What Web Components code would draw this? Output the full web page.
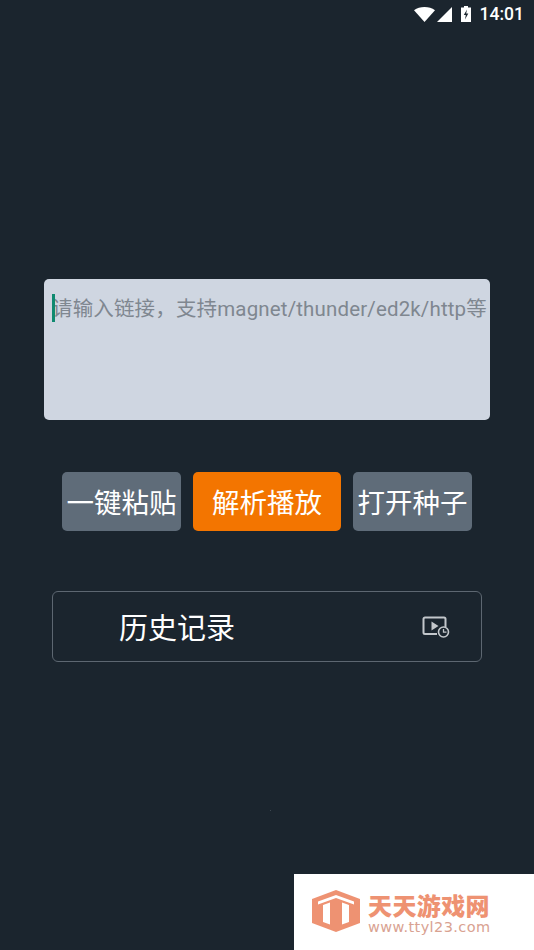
<!DOCTYPE html>
<html lang="zh">
<head>
<meta charset="utf-8">
<title>解析播放</title>
<style>
  html, body { margin: 0; height: 100%; background: #1b252e; }
</style>
</head>
<body>
<app-screen>
  <status-bar slot="status"></status-bar>
  <link-input placeholder="请输入链接，支持magnet/thunder/ed2k/http等"></link-input>
  <div class="buttons" style="display:flex;gap:12px;margin:52px 0 0 62px;">
    <action-button style="--btn-w:119px">一键粘贴</action-button>
    <action-button style="--btn-w:148px;--btn-bg:#f37500">解析播放</action-button>
    <action-button style="--btn-w:119px">打开种子</action-button>
  </div>
  <history-row>历史记录</history-row>
  <water-mark slot="overlay"></water-mark>
</app-screen>

<script>
const CJK = 'Roboto, "Noto Sans CJK SC", "Noto Sans", sans-serif';

class AppScreen extends HTMLElement {
    constructor() {
        super();
        this.attachShadow({ mode: 'open' });
    }
    connectedCallback() {
        this.shadowRoot.innerHTML = `
            <style>
                :host {
                    display: block;
                    position: relative;
                    width: 534px;
                    height: 950px;
                    overflow: hidden;
                    background: #1b252e;
                    font-family: ${CJK};
                }
                main { padding-top: 251px; }
                .dot {
                    position: absolute;
                    left: 270px;
                    top: 810px;
                    width: 1px;
                    height: 1px;
                    background: #3d4750;
                }
            </style>
            <slot name="status"></slot>
            <main><slot></slot></main>
            <div class="dot"></div>
            <slot name="overlay"></slot>
        `;
    }
}

class StatusBar extends HTMLElement {
    constructor() {
        super();
        this.attachShadow({ mode: 'open' });
    }
    connectedCallback() {
        this.shadowRoot.innerHTML = `
            <style>
                :host {
                    display: flex;
                    align-items: center;
                    justify-content: flex-end;
                    height: 28px;
                    padding-right: 10px;
                    color: #fff;
                    font: 500 17.500px Roboto, sans-serif;
                }
                svg { display: block; fill: #fff; }
                .wifi { margin-right: 2px; }
                .signal { margin-right: 9px; }
                .batt { margin-right: 9px; }
            </style>
            <svg class="wifi" width="21" height="15" viewBox="0 0 21 15"><path d="M0 3.2C3 1 6.500 0 10.500 0S18 1 21 3.200L10.500 15z"/></svg>
            <svg class="signal" width="15" height="15" viewBox="0 0 15 15"><path d="M15 0V15H0z"/></svg>
            <svg class="batt" width="10" height="16" viewBox="0 0 10 16"><path fill-rule="evenodd" d="M3 0H7V1.500H10V16H0V1.500H3zM6 3.500L2.800 9H4.800L4 13.500L7.300 7.500H5.200z"/></svg>
            <span>14:01</span>
        `;
    }
}

class LinkInput extends HTMLElement {
    constructor() {
        super();
        this.attachShadow({ mode: 'open' });
    }
    connectedCallback() {
        const placeholder = this.getAttribute('placeholder') || '';
        this.shadowRoot.innerHTML = `
            <style>
                :host {
                    display: block;
                    box-sizing: border-box;
                    position: relative;
                    width: 446px;
                    height: 141px;
                    margin-left: 44px;
                    padding: 15px 0 0 8px;
                    border-radius: 5px;
                    background: #cfd6e1;
                }
                .text {
                    color: #7f8790;
                    font-size: 20.500px;
                    letter-spacing: 0.150px;
                    line-height: 30px;
                    white-space: nowrap;
                }
                .caret {
                    position: absolute;
                    left: 8px;
                    top: 15px;
                    width: 3px;
                    height: 28px;
                    background: #0f8a70;
                }
            </style>
            <div class="text">${placeholder}</div>
            <div class="caret"></div>
        `;
    }
}

class ActionButton extends HTMLElement {
    constructor() {
        super();
        this.attachShadow({ mode: 'open' });
    }
    connectedCallback() {
        this.shadowRoot.innerHTML = `
            <style>
                :host {
                    display: flex;
                    align-items: center;
                    justify-content: center;
                    box-sizing: border-box;
                    width: var(--btn-w, 119px);
                    height: 59px;
                    padding-bottom: 2px;
                    border-radius: 5px;
                    background: var(--btn-bg, #5f6c79);
                    color: #fff;
                    font-size: 27.500px;
                    white-space: nowrap;
                }
            </style>
            <slot></slot>
        `;
    }
}

class HistoryRow extends HTMLElement {
    constructor() {
        super();
        this.attachShadow({ mode: 'open' });
    }
    connectedCallback() {
        this.shadowRoot.innerHTML = `
            <style>
                :host {
                    display: flex;
                    align-items: center;
                    justify-content: space-between;
                    box-sizing: border-box;
                    width: 430px;
                    height: 71px;
                    margin: 60px 0 0 52px;
                    padding: 0 31px 0 66px;
                    border: 1.500px solid #5d6771;
                    border-radius: 6px;
                    color: #fff;
                    font-size: 29px;
                }
                span { position: relative; top: -1px; }
                svg { display: block; fill: none; stroke: #c3c7cb; }
            </style>
            <span><slot></slot></span>
            <svg width="28" height="22" viewBox="0 0 28 22">
                <path d="M15 18H3a1.500 1.500 0 0 1-1.500-1.500V3A1.500 1.500 0 0 1 3 1.500h19A1.500 1.500 0 0 1 23.500 3v8" stroke-width="2"/>
                <path d="M9.500 5.500L16.500 10L9.500 14.500z" fill="#c3c7cb" stroke="none"/>
                <circle cx="21.500" cy="16" r="5" stroke-width="1.600"/>
                <path d="M21.500 13v3.200h3" stroke-width="1.300"/>
            </svg>
        `;
    }
}

class WaterMark extends HTMLElement {
    constructor() {
        super();
        this.attachShadow({ mode: 'open' });
    }
    connectedCallback() {
        this.shadowRoot.innerHTML = `
            <style>
                :host {
                    position: absolute;
                    right: 0;
                    bottom: 0;
                    box-sizing: border-box;
                    display: flex;
                    align-items: center;
                    width: 240px;
                    height: 76px;
                    padding: 0 0 2px 18px;
                    background: #fff;
                }
                svg { display: block; flex: none; margin-right: 8px; }
                .copy { padding-top: 7px; }
                .name {
                    color: #ee9272;
                    font-size: 24px;
                    font-weight: 900;
                    line-height: 24px;
                    letter-spacing: 0.400px;
                    white-space: nowrap;
                }
                .url {
                    color: #d9a291;
                    font: 400 14.500px/16px "DejaVu Sans", sans-serif;
                    letter-spacing: 0.400px;
                    white-space: nowrap;
                }
            </style>
            <svg width="48" height="42" viewBox="0 0 48 42">
                <path fill="#ee9272" d="M24 0L48 9V33L24 42L0 33V9z"/>
                <path fill="#fff" d="M6 11.500L24 5L42 11.500V14.500L24 8L6 14.500z"/>
                <path fill="#fff" d="M11 15L18 12.500V34.500L11 32zM30 12.500L37 15V32L30 34.500z"/>
            </svg>
            <div class="copy">
                <div class="name">天天游戏网</div>
                <div class="url">www.ttyl23.com</div>
            </div>
        `;
    }
}

customElements.define('app-screen', AppScreen);
customElements.define('status-bar', StatusBar);
customElements.define('link-input', LinkInput);
customElements.define('action-button', ActionButton);
customElements.define('history-row', HistoryRow);
customElements.define('water-mark', WaterMark);
</script>
</body>
</html>
